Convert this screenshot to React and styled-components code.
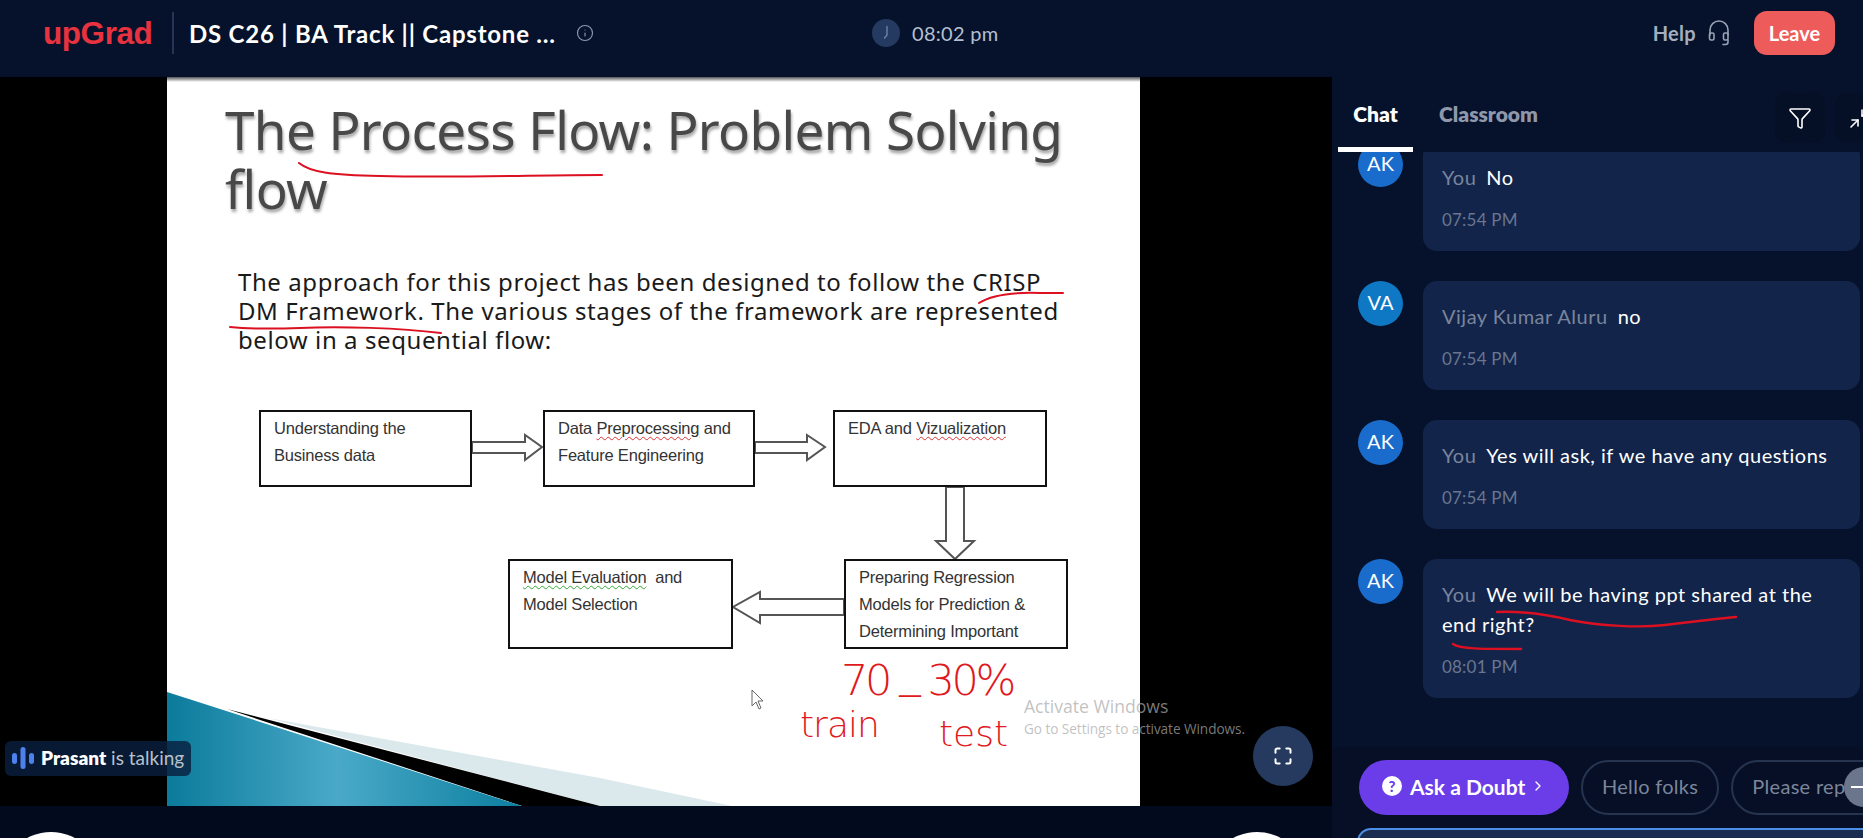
import React from "react";
import styled, { createGlobalStyle } from "styled-components";
import { Info, Filter, Minimize2, ChevronRight, Maximize } from "lucide-react";

const UI = `Lato, "Noto Sans", sans-serif`;

const Global = createGlobalStyle`
  html, body { margin: 0; padding: 0; height: 100%; overflow: hidden; background: #06122b; }
  #root { height: 838px; }
  * { box-sizing: border-box; }
`;

const Page = styled.div`
  position: relative;
  width: 1863px;
  height: 838px;
  overflow: hidden;
  display: flex;
  flex-direction: column;
  font-family: ${UI};
  background: #06122b;
`;

/* ---------- header ---------- */
const Header = styled.header`
  height: 77px;
  flex: none;
  display: grid;
  grid-template-columns: 829px auto 1fr;
  align-items: center;
  padding: 0 28px 11px 43px;
  background: #06122b;
`;
const Left = styled.div`display: flex; align-items: center;`;
const Logo = styled.div`
  font-family: "Liberation Sans", sans-serif;
  font-weight: 700;
  font-size: 31.5px;
  letter-spacing: -0.45px;
  color: #e8323f;
  width: 129px;
  line-height: 42px;
`;
const Divider = styled.div`width: 2px; height: 42px; background: #253553;`;
const Title = styled.div`
  margin-left: 15px;
  color: #fff;
  font-weight: 700;
  font-size: 24px;
  letter-spacing: 0.78px;
  white-space: nowrap;
  width: 387px;
`;
const Centre = styled.div`display: flex; align-items: center; gap: 12px; color: #b5bfd2; font-size: 20px; letter-spacing: 0.3px;`;
const ClockDot = styled.div`width: 28px; height: 28px; border-radius: 50%; background: #243a60; display: flex; align-items: center; justify-content: center;`;
const Right = styled.div`display: flex; align-items: center; justify-content: flex-end;`;
const Help = styled.span`color: #a4adbe; font-size: 20px; letter-spacing: 0.3px; font-weight: 700; margin-right: 12px;`;
const Leave = styled.button`
  margin-left: 24px;
  width: 81px;
  height: 44px;
  border: 0;
  border-radius: 13px;
  background: #ee5b5b;
  color: #fff;
  font-family: ${UI};
  font-weight: 700;
  font-size: 20px;
  padding: 0;
`;

/* ---------- main ---------- */
const Main = styled.div`flex: 1; min-height: 0; display: flex;`;
const VideoCol = styled.div`width: 1332px; flex: none; display: flex; flex-direction: column;`;
const Stage = styled.div`
  position: relative;
  height: 729px;
  flex: none;
  background: #000;
  padding-left: 167px;
`;
const Slide = styled.div`
  position: relative;
  width: 973px;
  height: 729px;
  overflow: hidden;
  background: #fff;
  padding: 23px 0 0 59px;
  &::before {
    content: "";
    position: absolute;
    left: 0; right: 0; top: 0;
    height: 5px;
    background: linear-gradient(#555, rgba(255,255,255,0));
  }
`;
const SlideTitle = styled.h1`
  margin: 0 0 0 -1px;
  font-family: "Noto Sans", sans-serif;
  font-weight: 400;
  font-size: 53px;
  line-height: 59px;
  letter-spacing: -0.62px;
  color: #484848;
  white-space: nowrap;
  text-shadow: 1px 3px 3px rgba(0,0,0,.35);
`;
const SlideBody = styled.p`
  margin: 49px 0 0 12px;
  font-family: "Noto Sans", sans-serif;
  font-size: 24px;
  line-height: 29px;
  letter-spacing: 0.58px;
  color: #1a1a1a;
  white-space: nowrap;
`;
const Node = styled.div`
  position: absolute;
  left: ${p => p.$x}px;
  top: ${p => p.$y}px;
  width: ${p => p.$w}px;
  height: ${p => p.$h}px;
  border: 2.5px solid #111;
  background: #fff;
  padding: ${p => p.$pt}px 0 0 ${p => p.$pl}px;
  font-family: "Liberation Sans", sans-serif;
  font-size: 16.5px;
  line-height: 27px;
  color: #333;
  white-space: pre;
  letter-spacing: -0.2px;
`;
const Squiggle = styled.span`
  text-decoration: underline wavy ${p => p.$c};
  text-decoration-thickness: 1px;
  text-underline-offset: 2px;
`;
const SlideArt = styled.svg`position: absolute; left: 0; top: 0; width: 973px; height: 729px; pointer-events: none;`;
const Hand = styled.div`
  position: absolute;
  left: ${p => p.$x}px;
  top: ${p => p.$y}px;
  font-family: "DejaVu Sans", sans-serif;
  font-weight: 200;
  font-size: ${p => p.$s}px;
  letter-spacing: ${p => p.$ls}px;
  line-height: 1;
  color: #e01820;
  white-space: pre;
`;
const HandDash = styled.span`position: relative; top: -8px;`;
const Activate = styled.div`
  position: absolute;
  left: 1024px;
  top: 617px;
  font-family: "Open Sans", sans-serif;
  color: rgba(170,170,170,.72);
  font-size: 17.6px;
  line-height: 24px;
  white-space: nowrap;
`;
const ActivateSub = styled.div`font-size: 13.6px; line-height: 18px; margin-top: 2px; letter-spacing: -0.05px;`;
const Talking = styled.div`
  position: absolute;
  left: 5px;
  top: 664px;
  width: 186px;
  height: 35px;
  border-radius: 6px;
  background: rgba(10,32,62,.82);
  display: flex;
  align-items: center;
  gap: 7px;
  padding: 0 0 2px 7px;
  font-size: 19px;
  color: #b9c0cc;
`;
const Bars = styled.svg`width: 22px; height: 22px; flex: none;`;
const Strong = styled.b`color: #fff; font-weight: 800;`;
const FullBtn = styled.button`
  position: absolute;
  left: 1253px;
  top: 649px;
  width: 60px;
  height: 60px;
  padding: 0;
  border: 0;
  border-radius: 50%;
  background: #253a5e;
  color: #fff;
  display: flex;
  align-items: center;
  justify-content: center;
`;
const Controls = styled.div`
  flex: 1;
  min-height: 0;
  overflow: hidden;
  background: #020a1e;
  display: flex;
  justify-content: space-between;
  padding: 26px 25px 0 1px;
`;
const CtlCircle = styled.div`width: 100px; height: 100px; border-radius: 50%; background: #fff; flex: none;`;

/* ---------- chat ---------- */
const Panel = styled.aside`
  width: 531px;
  flex: none;
  height: 761px;
  display: flex;
  flex-direction: column;
  overflow: hidden;
  background: #06122b;
`;
const Tabs = styled.div`
  height: 75px;
  flex: none;
  display: grid;
  grid-template-columns: 443px 1fr;
  background: #06122b;
  position: relative;
  z-index: 1;
`;
const TabGroup = styled.div`display: flex; padding-left: 6px; gap: 25px;`;
const Tab = styled.div`
  width: ${p => p.$w}px;
  display: flex;
  align-items: center;
  justify-content: center;
  padding-top: 3px;
  font-size: 21px;
  font-weight: 800;
  color: ${p => (p.$on ? "#fff" : "#8f98ab")};
  border-bottom: 5px solid ${p => (p.$on ? "#fff" : "transparent")};
`;
const Tools = styled.div`display: flex; gap: 10px; padding-top: 16px; align-items: flex-start;`;
const ToolBtn = styled.div`
  width: 50px;
  height: 50px;
  flex: none;
  border-radius: 12px;
  background: #050f26;
  color: #fff;
  display: flex;
  align-items: center;
  justify-content: center;
`;
const List = styled.div`
  flex: 1;
  min-height: 0;
  overflow: hidden;
  display: flex;
  flex-direction: column;
  gap: 30px;
  margin-top: -10px;
  padding: 0 3px 0 26px;
`;
const Msg = styled.div`display: flex; gap: 20px; align-items: flex-start; flex: none;`;
const Avatar = styled.div`
  width: 45px;
  height: 45px;
  flex: none;
  border-radius: 50%;
  background: ${p => p.$c};
  color: #fff;
  font-size: 20px;
  display: flex;
  align-items: center;
  justify-content: center;
  padding-bottom: 3px;
`;
const Bubble = styled.div`
  flex: 1;
  min-width: 0;
  background: #12244a;
  border-radius: 14px;
  padding: 20px 19px 16px;
`;
const Line = styled.div`font-size: 20px; line-height: 30px; color: #fff; letter-spacing: 0.5px;`;
const Who = styled.span`color: #7a859c; margin-right: 10px; font-weight: 400;`;
const Time = styled.div`margin-top: 13px; font-size: 17px; line-height: 30px; color: #6a7690; letter-spacing: 0.2px;`;

const Composer = styled.div`
  height: 91px;
  flex: none;
  background: #060f26;
  padding: 13px 0 0 27px;
  position: relative;
  overflow: hidden;
`;
const Chips = styled.div`display: flex; gap: 12px; width: 700px;`;
const Ask = styled.button`
  width: 210px;
  height: 55px;
  flex: none;
  border: 0;
  border-radius: 28px;
  background: #6a3de8;
  color: #fff;
  font-family: ${UI};
  font-weight: 700;
  font-size: 21px;
  display: flex;
  align-items: center;
  padding: 0 0 3px 23px;
`;
const AskMark = styled.span`
  width: 20px; height: 20px; border-radius: 50%;
  background: #fff; color: #6a3de8;
  font-size: 15px; font-weight: 900;
  display: flex; align-items: center; justify-content: center;
  margin-right: 8px;
`;
const Chip = styled.div`
  height: 55px;
  flex: none;
  border: 2px solid #26344f;
  border-radius: 28px;
  color: #7c869b;
  font-size: 20px;
  letter-spacing: 0.3px;
  display: flex;
  align-items: center;
  padding: 0 19px 3px;
`;
const MinusBtn = styled.div`
  position: absolute;
  left: 512px;
  top: 20px;
  width: 40px;
  height: 40px;
  border-radius: 50%;
  background: #6b768c;
  display: flex;
  align-items: center;
  padding-left: 7px;
  &::before { content: ""; width: 13px; height: 2px; background: #fff; }
`;
const InputBox = styled.div`
  position: absolute;
  left: 25px;
  top: 81px;
  width: 540px;
  height: 60px;
  border: 2px solid #4c8fe6;
  border-radius: 14px;
  background: #1a2c50;
`;

const Ink = styled.svg`position: absolute; left: 0; top: 0; width: 1863px; height: 838px; pointer-events: none; z-index: 5;`;

const msgs = [
  { who: "You", i: "AK", c: "#1a6ccc", t: "No", at: "07:54 PM" },
  { who: "Vijay Kumar Aluru", i: "VA", c: "#0f78c4", t: "no", at: "07:54 PM" },
  { who: "You", i: "AK", c: "#1a6ccc", t: "Yes will ask, if we have any questions", at: "07:54 PM" },
  { who: "You", i: "AK", c: "#1a6ccc", t: "We will be having ppt shared at the end right?", at: "08:01 PM" },
];

export default function App() {
  return (
    <Page>
      <Global />
      <Header>
        <Left>
          <Logo>upGrad</Logo>
          <Divider />
          <Title>DS C26 | BA Track || Capstone ...</Title>
          <Info size={18} color="#8f9bb3" strokeWidth={1.5} />
        </Left>
        <Centre>
          <ClockDot>
            <svg width="16" height="16" viewBox="0 0 16 16" fill="none" stroke="#6f82a6" strokeWidth="1.4" strokeLinecap="round"><path d="M9 1.5V10L6.5 13" /></svg>
          </ClockDot>
          08:02 pm
        </Centre>
        <Right>
          <Help>Help</Help>
          <svg width="22" height="26" viewBox="0 0 22 26" fill="none" stroke="#98a2b5" strokeWidth="1.6" strokeLinecap="round" strokeLinejoin="round">
            <path d="M2 15V10a9 9 0 0 1 18 0v5" />
            <rect x="1.5" y="13" width="4.5" height="7" rx="1.5" />
            <rect x="15.5" y="13" width="4.5" height="7" rx="1.5" />
            <path d="M20 20v2a2.5 2.5 0 0 1-2.5 2.5H15" />
          </svg>
          <Leave>Leave</Leave>
        </Right>
      </Header>

      <Main>
        <VideoCol>
          <Stage>
            <Slide>
              <SlideArt viewBox="0 0 973 729">
                <defs>
                  <linearGradient id="teal" x1="0" y1="0" x2="1" y2="0">
                    <stop offset="0" stopColor="#0b7b9b" />
                    <stop offset=".48" stopColor="#4aa9c8" />
                    <stop offset="1" stopColor="#0c7f9f" />
                  </linearGradient>
                </defs>
                <polygon points="101,641 433,701 565,729 433,729" fill="#dce9ec" />
                <polygon points="60,632 355,729 433,729" fill="#000" />
                <polygon points="0,615 355,729 0,729" fill="url(#teal)" />
                <g fill="#fff" stroke="#555" strokeWidth="2">
                  <polygon points="305,365 358,365 358,358 375,370 358,383 358,376 305,376" />
                  <polygon points="588,365 640,365 640,358 658,370 640,383 640,376 588,376" />
                  <polygon points="779,410 797,410 797,464 807,464 788,482 769,464 779,464" />
                  <polygon points="677,522 593,522 593,515 566,530 593,546 593,538 677,538" />
                </g>
                <path d="M585 613v16l4-4 3 7 2-1-3-7h5z" fill="#fff" stroke="#666" strokeWidth="1" />
              </SlideArt>
              <SlideTitle>The Process Flow: Problem Solving<br />flow</SlideTitle>
              <SlideBody>
                The approach for this project has been designed to follow the CRISP<br />
                DM Framework. The various stages of the framework are represented<br />
                below in a sequential flow:
              </SlideBody>
              <Node $x={92} $y={333} $w={213} $h={77} $pt={3} $pl={13}>Understanding the{"\n"}Business data</Node>
              <Node $x={376} $y={333} $w={212} $h={77} $pt={3} $pl={13}>Data <Squiggle $c="#d33">Preprocessing</Squiggle> and{"\n"}Feature Engineering</Node>
              <Node $x={666} $y={333} $w={214} $h={77} $pt={3} $pl={13}>EDA and <Squiggle $c="#d33">Vizualization</Squiggle></Node>
              <Node $x={341} $y={482} $w={225} $h={90} $pt={3} $pl={13}><Squiggle $c="#3a3">Model Evaluation</Squiggle>  and{"\n"}Model Selection</Node>
              <Node $x={677} $y={482} $w={224} $h={90} $pt={3} $pl={13}>Preparing Regression{"\n"}Models for Prediction &amp;{"\n"}Determining Important</Node>
              <Hand $x={674} $y={582} $s={43} $ls={-3.4}>70 <HandDash>_</HandDash> 30%</Hand>
              <Hand $x={633} $y={630} $s={36} $ls={-1}>train</Hand>
              <Hand $x={772} $y={639} $s={36} $ls={0}>test</Hand>
            </Slide>
            <Activate>
              Activate Windows
              <ActivateSub>Go to Settings to activate Windows.</ActivateSub>
            </Activate>
            <Talking>
              <Bars viewBox="0 0 22 22" fill="#4d82ee">
                <rect x="0" y="6" width="5" height="11" rx="2.5" />
                <rect x="8.5" y="0" width="5" height="22" rx="2.5" />
                <rect x="17" y="6" width="5" height="11" rx="2.5" />
              </Bars>
              <span><Strong>Prasant</Strong> is talking</span>
            </Talking>
            <FullBtn aria-label="Fullscreen"><Maximize size={20} strokeWidth={2.4} /></FullBtn>
          </Stage>
          <Controls><CtlCircle /><CtlCircle /></Controls>
        </VideoCol>

        <Panel>
          <Tabs>
            <TabGroup>
              <Tab $on $w={75}>Chat</Tab>
              <Tab $w={101}>Classroom</Tab>
            </TabGroup>
            <Tools>
              <ToolBtn><Filter size={24} strokeWidth={1.6} /></ToolBtn>
              <ToolBtn><Minimize2 size={24} strokeWidth={1.6} /></ToolBtn>
            </Tools>
          </Tabs>
          <List>
            {msgs.map((m, n) => (
              <Msg key={n}>
                <Avatar $c={m.c}>{m.i}</Avatar>
                <Bubble>
                  <Line><Who>{m.who}</Who>{m.t}</Line>
                  <Time>{m.at}</Time>
                </Bubble>
              </Msg>
            ))}
          </List>
          <Composer>
            <Chips>
              <Ask><AskMark>?</AskMark>Ask a Doubt<ChevronRight size={16} style={{ marginLeft: 5 }} /></Ask>
              <Chip>Hello folks</Chip>
              <Chip>Please repeat</Chip>
            </Chips>
            <MinusBtn />
            <InputBox />
          </Composer>
        </Panel>
      </Main>

      <Ink viewBox="0 0 1863 838" fill="none" stroke="#dc1020" strokeWidth="2" strokeLinecap="round" strokeLinejoin="round">
        <path d="M299 163C310 172 330 175 380 176C450 178 540 175 602 175" />
        <path d="M979 303C990 296 1010 292 1040 293L1063 293" />
        <path d="M230 327C250 329 270 329 300 328C340 326 400 328 441 333" />
        <path d="M1497 612C1520 611 1540 613 1570 620C1600 626 1640 628 1665 625C1690 622 1715 619 1736 617" strokeWidth="2.4" />
        <path d="M1453 644C1460 649 1480 649 1521 649" strokeWidth="2.4" />
      </Ink>
    </Page>
  );
}
